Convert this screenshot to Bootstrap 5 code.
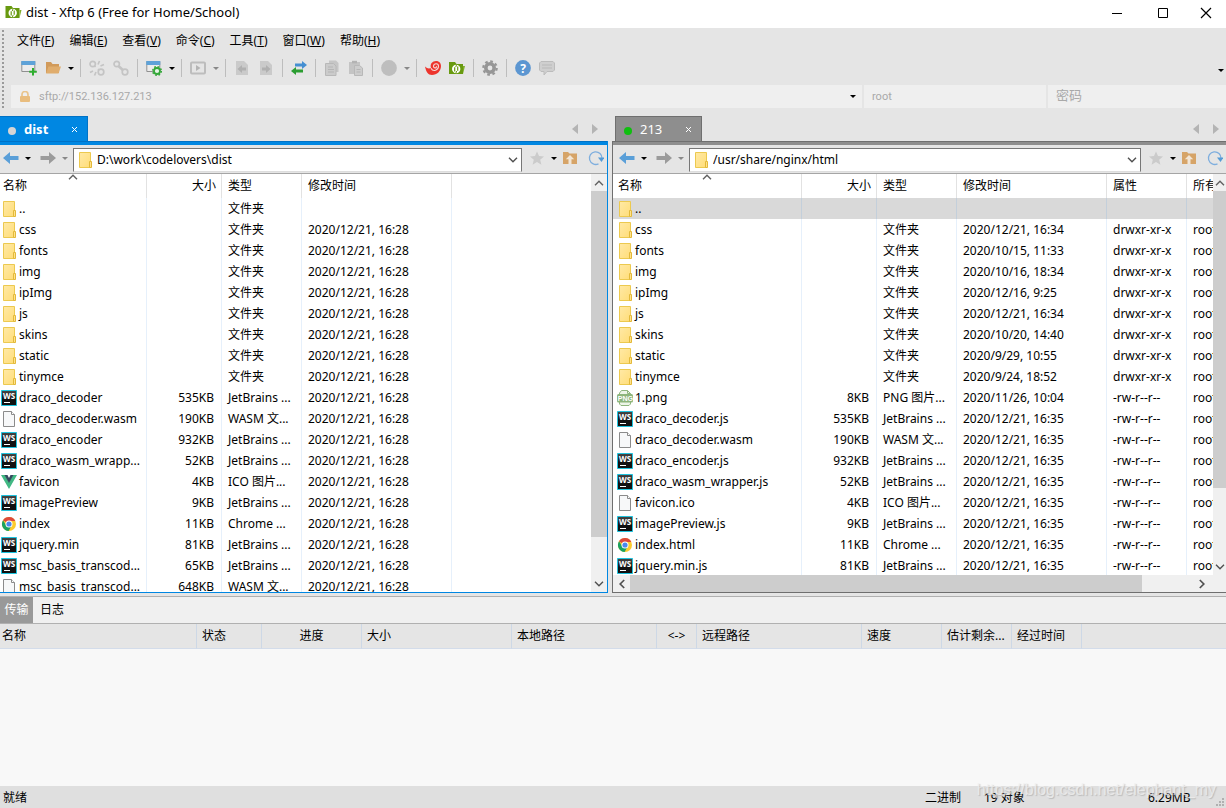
<!DOCTYPE html>
<html lang="zh-CN">
<head>
<meta charset="utf-8">
<meta name="viewport" content="width=device-width, initial-scale=1">
<title>dist - Xftp 6</title>
<link href="https://cdn.jsdelivr.net/npm/bootstrap@5.3.0/dist/css/bootstrap.min.css" rel="stylesheet">
<style>
body{font-family:"Noto Sans","Noto Sans CJK SC",sans-serif;font-size:12px;line-height:20px;color:#000;background:#e5e5e5;white-space:nowrap}
button{border:0;background:none;padding:0;color:inherit;line-height:inherit;font-size:inherit}
button svg,td svg,.fld>svg{display:block;flex:none}
.titlebar{height:28px;background:#fff;padding-left:5px;font-size:13px}
.titlebar .winbtn{width:46px;height:26px}
.titlebar .winbtn:last-child{width:40px}
.grip{width:11px;background:radial-gradient(circle at 1px 1px,#9a9a9a 1px,transparent 1px) 2px 2px/11px 4px repeat-y}
.menus{height:26px;gap:15px;padding-left:6px}
.tools{height:31px;padding:0 0 3px 6px}
.tb{width:24px;height:24px;display:flex;align-items:center;justify-content:center}
.car{width:11px;height:24px;display:flex;align-items:center;justify-content:center}
.car::after{content:"";border:3px solid transparent;border-top-color:currentColor;border-bottom:0}
.dim{color:#888}
.vsep{width:1px;height:18px;background:#bdbdbd;margin:0 4px}
.addr{height:23px;gap:2px}
.fld{background:#efefef;color:#a9a9a9}
.fld input,.path input{border:0;background:transparent;outline:0;padding:0;min-width:0;color:inherit;font-size:12px}
.fld input{font:11px/20px Roboto,"Noto Sans CJK SC",sans-serif}
.fld input::placeholder{color:#a9a9a9;opacity:1;font-size:13px}
.w-user{width:182px}.w-pass{width:178px}
.pane-area{flex:481 1 0;min-height:0;margin-top:4px}
.pane-l{width:calc(50% - 5px);--edge:#0087e2;--line:#0072c6}
.pane-r{flex:1;min-width:0;margin-left:4px;--edge:#8e8e8e;--line:#6f6f6f}
.tabrow{height:29px;padding-top:4px}
.tabnav{gap:14px;padding-right:10px}
.pane-r .tabnav{padding-right:7px}
.ptab{background:var(--edge);border:1px solid var(--line);border-bottom:0;color:#fff;font-size:13px;width:88px;padding:0 9px 0 8px}
.pane-l .ptab{border-left:0}
.pane-r .ptab{margin-left:3px;width:87px}
.led{width:8px;height:8px;border-radius:50%;background:#d5d5d5;margin-top:3px}
.led.on{background:#0fbf0f}
.frame{border:1px solid var(--line);border-top:0;min-height:0;flex:1}
.pane-l .frame{border-left:0;border-color:#0087e2}
.pane-r .frame{border-right:0}
.accent{height:4px;background:var(--edge);border-top:1px solid var(--line)}
.navrow{height:29px;padding-bottom:2px;border-bottom:1px solid #a5a5a5;background:#e5e5e5}
.navrow .tb{width:22px}
.pane-r .navrow{padding-left:3px}
.path{height:24px;background:#fff;border:1px solid #777;border-bottom-color:#ddd;padding:0 3px;margin:3px 0 0 3px}
.path input{margin-left:4px}
.listing{background:#fff;min-height:0;flex:1}
.view{overflow:hidden;min-width:0;flex:1}
.files{table-layout:fixed;width:100%;margin:0;border-collapse:separate;border-spacing:0;color:#000}
.files.wide{width:654px}
.files th{height:24px;font-weight:400;padding:0 6px;border-right:1px solid #e2e2e2;line-height:24px;overflow:hidden}
.files td{height:21px;padding:0 6px;border-right:1px solid #e6f0fb;line-height:21px;overflow:hidden}
.files th:first-child{padding:0 3px;position:relative}
.files td:first-child{padding:0 1px}
.wide th:first-child{padding-left:5px}
.wide td:first-child{padding-left:4px}
.files .num{text-align:right;padding-right:7px}
.files th.num{padding-right:5px}
.files tr.sel td{background:#d9d9d9;border-color:#c3cfdb}
.files .endcol{border-right:0}
.sortmark{position:absolute;left:50%;top:0;margin-left:-5px}
.nm{display:flex;align-items:center;gap:2px;height:20px}
.vbar{width:16px;background:#f0f0f0;flex:none}
.pane-r .vbar{width:13px}
.vbar button,.hbar button{width:100%;height:17px;display:flex;align-items:center;justify-content:center;flex:none}
.hbar button{width:17px}
.track{flex:1;min-height:0;min-width:0}
.thumb{background:#cdcdcd}
.hbar{height:17px;background:#f0f0f0}
.bottom{flex:190 1 0;min-height:0;padding-top:3px}
.btabs{height:28px;background:#f0f0f0;border-top:1px solid #b0b0b0;border-bottom:1px solid #b0b0b0}
.btabs button{padding:0 3px}
.btabs .cur{background:#999;color:#fff;width:33px}
.queue{background:#f8f8f8}
.qt{table-layout:fixed;width:100%;border-collapse:separate;border-spacing:0}
.qt th{height:25px;background:#e5e5e5;font-weight:400;padding:0 5px;border-right:1px solid #cdd8e6;border-bottom:1px solid #d3dcea;overflow:hidden}
.qt th:first-child{padding-left:2px}
.qt th:last-child{border-right:0}
.status{height:22px;background:#dfdfdf;padding:2px 3px 0}
.st-mode{width:59px}.st-num{width:164px}.st-size{width:75px}
.wm{position:absolute;right:10px;bottom:8px;font:16px/20px "Liberation Sans",sans-serif;color:rgba(240,240,240,.75);text-shadow:1px 1px 1px rgba(120,120,120,.35);pointer-events:none}
</style>
</head>
<body>
<svg width="0" height="0" class="position-absolute" aria-hidden="true">
<defs>
<linearGradient id="fg" x1="0" x2="1" y2="1"><stop stop-color="#ffe9a6"/><stop offset="1" stop-color="#ffdd78"/></linearGradient>
<linearGradient id="wg" y1="0" x2="0" y2="1"><stop stop-color="#484848"/><stop offset=".6" stop-color="#111"/></linearGradient>
<symbol id="folder" viewBox="0 0 16 16"><path d="M2.500.5h11v15h-11z" fill="url(#fg)" stroke="#ecc94f"/><path d="M12.500 9.500h2v6h-2z" fill="#ffe28b" stroke="#e3b93a"/></symbol>
<symbol id="doc" viewBox="0 0 16 16"><path d="M2.500.5h8l3 3v12h-11z" fill="#f7f8f9" stroke="#8b8b8b"/><path d="M10.500.5v3h3" fill="#fff" stroke="#8b8b8b"/></symbol>
<symbol id="ws" viewBox="0 0 16 16"><path d="M.5.5h15v15H.5z" fill="url(#wg)" stroke="#1fc3de"/><text x="2" y="8.500" font-size="8" font-weight="bold" font-family="Noto Sans" fill="#fff">WS</text><path d="M3 12h6v1H3z" fill="#fff"/></symbol>
<symbol id="vue" viewBox="0 0 16 16"><path d="M0 1h4l4 7 4-7h4L8 15z" fill="#41b883"/><path d="M3.500 1h3L8 4l1.500-3h3L8 9z" fill="#35495e"/></symbol>
<symbol id="chrome" viewBox="0 0 16 16"><circle cx="8" cy="8" r="7" fill="#fccb2e"/><path d="M8 8 2 4.300A7 7 0 0 1 14.300 5H8z" fill="#dd4a3b"/><path d="M2 4.300A7 7 0 0 0 7.600 15L10.600 9.500 8 8 5 9z" fill="#1ba261"/><circle cx="8" cy="8" r="3.500" fill="#fff"/><circle cx="8" cy="8" r="2.600" fill="#4a88ee"/></symbol>
<symbol id="png" viewBox="0 0 16 16"><path d="M2.500 4.500V3l2-2.500h6l3 3v1M2.500 12v2l1.500 1.500h8l1.500-1.500v-2" fill="#edf5e8" stroke="#8fb57e"/><path d="M10.500.5v3h3" fill="none" stroke="#8fb57e"/><rect y="4" width="16" height="8.500" rx="1.500" fill="#8db57b"/><text x=".8" y="10.900" font-size="7" font-weight="bold" font-family="Liberation Sans" fill="#fff">PNG</text></symbol>
<symbol id="xftp" viewBox="0 0 16 16"><path d="M0 2h6l1.500 2H14v10H0z" fill="#689a10"/><path d="M14 6h2l-2 8z" fill="#80ad2b"/><circle cx="7.200" cy="9" r="4.200" fill="#fff"/><path d="M5.700 7.200v4.200M8.700 6.600v4.200" stroke="#689a10" stroke-width="1.200"/><path d="M7.600 4.500 6.800 7M7.600 11l-.8 2.500" stroke="#689a10"/></symbol>
<symbol id="new" viewBox="0 0 16 16"><path d="M.8 1.500h13v10H.8z" fill="#ececec" stroke="#909090"/><path d="M.3 1h14v4H.3z" fill="#5ea2d8"/><path d="M12 8v7.500M8.200 11.800h7.600" stroke="#2fae2f" stroke-width="2"/></symbol>
<symbol id="wgear" viewBox="0 0 16 16"><path d="M.8 1.500h13v10H.8z" fill="#ececec" stroke="#909090"/><path d="M.3 1h14v4H.3z" fill="#5ea2d8"/><circle cx="11" cy="11" r="3" fill="#e8f5e8" stroke="#35a83a" stroke-width="1.800"/><circle cx="11" cy="11" r="4.300" fill="none" stroke="#35a83a" stroke-width="1.500" stroke-dasharray="1.700 1.680"/></symbol>
<symbol id="open" viewBox="0 0 16 16"><path d="M1 2h5l1.500 2H14v9H1z" fill="#d19a5a"/><path d="M3.500 6.500H16L13.500 13.500H1z" fill="#e0ad6d"/></symbol>
<symbol id="link" viewBox="0 0 16 16"><g fill="none" stroke="#c4c4c4" stroke-width="1.700"><circle cx="3.700" cy="4" r="2.700"/><circle cx="12" cy="12" r="2.800"/><path d="m5.500 6 4.600 4.200" stroke-width="2.600"/></g></symbol>
<symbol id="unlink" viewBox="0 0 16 16"><g fill="none" stroke="#c4c4c4" stroke-width="1.700"><circle cx="3.700" cy="4" r="2.700"/><circle cx="12" cy="12" r="2.800"/><path d="m5.500 6 1 1M9 9l1 1M9 4.500 10.500 1M11.500 6 15 4.500M4 11l-3 1.500M7 12l-1.500 3.500"/></g></symbol>
<symbol id="play" viewBox="0 0 16 16"><rect x="1" y="2.500" width="14" height="11" rx="1" fill="none" stroke="#bdbdbd" stroke-width="2"/><path d="M6 5v6l4.500-3z" fill="#b4b4b4"/></symbol>
<symbol id="docl" viewBox="0 0 16 16"><path d="M2 1h8l4 4v10H2z" fill="#cacaca"/><path d="M3.500 9 8 5v2.500h4v3H8V13z" fill="#b0b0b0"/></symbol>
<symbol id="docr" viewBox="0 0 16 16"><path d="M2 1h8l4 4v10H2z" fill="#cacaca"/><path d="M12.500 9 8 5v2.500H4v3h4V13z" fill="#b0b0b0"/></symbol>
<symbol id="swap" viewBox="0 0 16 16"><path d="M4 3.500h7V1l5 4-5 4V6.500H4z" fill="#458fd2"/><path d="M12 9.500H5V7l-5 4 5 4v-2.500h7z" fill="#2b9d31"/></symbol>
<symbol id="copy" viewBox="0 0 16 16"><path d="M5 .5h7l2.500 2.500v9H5z" fill="#c6c6c6"/><path d="M1.500 3.500h8L12 6v9.500H1.500z" fill="#cbcbcb" stroke="#b8b8b8"/><path d="M4 7h5M4 9.500h6M4 12h6" stroke="#b5b5b5"/></symbol>
<symbol id="paste" viewBox="0 0 16 16"><path d="M1 2h11v12H1z" fill="#c4c4c4"/><path d="M4 .8h5v2.500H4z" fill="#b3b3b3"/><path d="M6.500 5.500h5L14.500 8v7.500h-8z" fill="#cdcdcd" stroke="#b8b8b8"/><path d="M8.500 9.500h4M8.500 12h4" stroke="#b5b5b5"/></symbol>
<symbol id="ball" viewBox="0 0 16 16"><circle cx="8" cy="8" r="7.900" fill="#bebebe"/></symbol>
<symbol id="swirl" viewBox="0 0 16 16"><path d="M0 6.500c2 2 4 2.500 6 1.500C4.500 4 7.500 1 11 1c3.500 0 5 2.500 5 5 0 5-4 9-9 9-4 0-6-3.500-7-8.500z" fill="#ed352d"/><path d="M6 8.300c2 4 7.500 2 7.500-2C13.500 3 9 3 8.500 6c-.2 2.500 3.200 2.500 3 .3" fill="none" stroke="#f5d8d6" stroke-width="1.100"/></symbol>
<symbol id="gear" viewBox="0 0 16 16"><circle cx="8" cy="8" r="4.200" fill="none" stroke="#969696" stroke-width="3.600"/><circle cx="8" cy="8" r="6.700" fill="none" stroke="#969696" stroke-width="2.200" stroke-dasharray="2.700 2.560"/></symbol>
<symbol id="help" viewBox="0 0 16 16"><circle cx="8" cy="8" r="7.900" fill="#5c96d1"/><text x="8" y="12.500" text-anchor="middle" font-size="12" font-weight="bold" font-family="Noto Sans" fill="#fff">?</text></symbol>
<symbol id="chat" viewBox="0 0 16 16"><path d="M2 1.500h12L15.500 3v7L14 11.500H8l-3 3.500v-3.500H2L.5 10V3z" fill="#cfcfcf" stroke="#bcbcbc"/><path d="M3 5h10M3 8h10" stroke="#b9b9b9"/></symbol>
<symbol id="lock" viewBox="0 0 12 12"><path d="M3 5V3.500a3 3 0 0 1 6 0V5" fill="none" stroke="#e9c48c" stroke-width="1.700"/><rect x="1" y="5" width="10" height="6" rx="1" fill="#e9bd7e"/></symbol>
<symbol id="back" viewBox="0 0 16 14"><path d="M0 7 7 1v4h8.500v4H7v4z"/></symbol>
<symbol id="fwd" viewBox="0 0 16 14"><path d="M16 7 9 1v4H.5v4H9v4z"/></symbol>
<symbol id="star" viewBox="0 0 16 16"><path d="m8 1.500 2 4.500 5 .4-3.800 3.300 1.200 5L8 12l-4.400 2.700 1.200-5L1 6.400 6 6z" fill="#cbcbcb"/></symbol>
<symbol id="upf" viewBox="0 0 16 16"><path d="M1 2h5l1.500 1.500H15V14H1z" fill="#d6a468"/><path d="M8 5 3.800 9.200H6.500V14h3V9.200h2.700z" fill="#f2e6d6"/></symbol>
<symbol id="reload" viewBox="0 0 16 16"><path d="M10.500 13.800A6.300 6.300 0 1 1 14 8.500" fill="none" stroke="#7eaede" stroke-width="1.300"/><path d="M10 7.500h6.500l-3 4.500z" fill="#559bd6"/></symbol>
<symbol id="chevd" viewBox="0 0 10 6"><path d="m1 .8 4 4 4-4" fill="none" stroke="#505050" stroke-width="1.400"/></symbol>
<symbol id="chevu" viewBox="0 0 10 6"><path d="m1 5.200 4-4 4 4" fill="none" stroke="#606060" stroke-width="1.400"/></symbol>
<symbol id="chevl" viewBox="0 0 6 10"><path d="m5.200 1-4 4 4 4" fill="none" stroke="#505050" stroke-width="1.700"/></symbol>
<symbol id="chevr" viewBox="0 0 6 10"><path d="m.8 1 4 4-4 4" fill="none" stroke="#505050" stroke-width="1.700"/></symbol>
</defs>
</svg>

<div class="d-flex flex-column vh-100 overflow-hidden position-relative">
  <header class="titlebar d-flex align-items-start flex-shrink-0">
    <div class="d-flex align-items-center h-100 gap-1 pb-1"><svg width="17" height="16"><use href="#xftp"/></svg><span>dist - Xftp 6 (Free for Home/School)</span></div>
    <div class="ms-auto d-flex">
      <button class="winbtn" aria-label="最小化"><svg class="mx-auto" width="12" height="12"><path d="M1 6.500h10" stroke="#000"/></svg></button>
      <button class="winbtn" aria-label="最大化"><svg class="mx-auto" width="12" height="12"><path d="M1.500 1.500h9v9h-9z" fill="none" stroke="#000"/></svg></button>
      <button class="winbtn" aria-label="关闭"><svg class="mx-auto" width="12" height="12"><path d="m1 1 10 10M11 1 1 11" stroke="#000" stroke-width="1.200"/></svg></button>
    </div>
  </header>

  <div class="d-flex flex-shrink-0">
    <div class="grip"></div>
    <div class="flex-grow-1">
      <nav class="menus d-flex align-items-center">
        <button>文件(<u>F</u>)</button><button>编辑(<u>E</u>)</button><button>查看(<u>V</u>)</button><button>命令(<u>C</u>)</button><button>工具(<u>T</u>)</button><button>窗口(<u>W</u>)</button><button>帮助(<u>H</u>)</button>
      </nav>
      <div class="tools d-flex align-items-center" role="toolbar" aria-label="工具栏">
        <button class="tb" aria-label="新建"><svg width="16" height="16"><use href="#new"/></svg></button>
        <button class="tb" aria-label="打开"><svg width="16" height="16"><use href="#open"/></svg></button>
        <button class="car" aria-label="打开列表"></button><span class="vsep"></span>
        <button class="tb" aria-label="断开"><svg width="16" height="16"><use href="#unlink"/></svg></button>
        <button class="tb" aria-label="重新连接"><svg width="16" height="16"><use href="#link"/></svg></button><span class="vsep"></span>
        <button class="tb" aria-label="属性"><svg width="16" height="16"><use href="#wgear"/></svg></button>
        <button class="car" aria-label="属性列表"></button><span class="vsep"></span>
        <button class="tb" aria-label="执行"><svg width="16" height="16"><use href="#play"/></svg></button>
        <button class="car dim" aria-label="执行列表"></button><span class="vsep"></span>
        <button class="tb" aria-label="向左传输"><svg width="16" height="16"><use href="#docl"/></svg></button>
        <button class="tb" aria-label="向右传输"><svg width="16" height="16"><use href="#docr"/></svg></button><span class="vsep"></span>
        <button class="tb" aria-label="同步"><svg width="16" height="16"><use href="#swap"/></svg></button><span class="vsep"></span>
        <button class="tb" aria-label="复制"><svg width="16" height="16"><use href="#copy"/></svg></button>
        <button class="tb" aria-label="粘贴"><svg width="16" height="16"><use href="#paste"/></svg></button><span class="vsep"></span>
        <button class="tb" aria-label="编码"><svg width="16" height="16"><use href="#ball"/></svg></button>
        <button class="car dim" aria-label="编码列表"></button><span class="vsep"></span>
        <button class="tb" aria-label="Xshell"><svg width="16" height="16"><use href="#swirl"/></svg></button>
        <button class="tb" aria-label="Xftp"><svg width="16" height="16"><use href="#xftp"/></svg></button><span class="vsep"></span>
        <button class="tb" aria-label="选项"><svg width="16" height="16"><use href="#gear"/></svg></button><span class="vsep"></span>
        <button class="tb" aria-label="帮助"><svg width="16" height="16"><use href="#help"/></svg></button>
        <button class="tb" aria-label="反馈"><svg width="16" height="16"><use href="#chat"/></svg></button>
        <button class="car ms-auto align-self-end" aria-label="更多"></button>
      </div>
      <div class="addr d-flex">
        <div class="fld d-flex align-items-center flex-grow-1 ps-2"><svg width="12" height="12"><use href="#lock"/></svg><input class="flex-grow-1 ms-2" aria-label="地址" value="sftp://152.136.127.213"><button class="car text-black me-1" aria-label="历史"></button></div>
        <div class="fld w-user d-flex ps-2"><input class="w-100" aria-label="用户名" value="root"></div>
        <div class="fld w-pass d-flex ps-2"><input class="w-100" type="password" aria-label="密码" placeholder="密码"></div>
      </div>
    </div>
  </div>

  <main class="pane-area d-flex">
    <section class="pane-l d-flex flex-column">
      <div class="tabrow d-flex flex-shrink-0">
        <button class="ptab d-flex align-items-center"><span class="led"></span><b class="ms-2">dist</b><svg class="ms-auto" width="7" height="7"><path d="m1 1 5 5M6 1 1 6" stroke="#fff"/></svg></button>
        <div class="tabnav ms-auto d-flex align-items-center"><svg width="6" height="10"><path d="M6 0v10L0 5z" fill="#b4b4b4"/></svg><svg width="6" height="10"><path d="M0 0v10l6-5z" fill="#b4b4b4"/></svg></div>
      </div>
      <div class="frame d-flex flex-column">
        <div class="accent"></div>
        <div class="navrow d-flex align-items-center flex-shrink-0">
          <button class="tb" aria-label="后退"><svg width="16" height="14" fill="#5a9fd8"><use href="#back"/></svg></button><button class="car me-1" aria-label="后退列表"></button>
          <button class="tb" aria-label="前进"><svg width="16" height="14" fill="#9b9b9b"><use href="#fwd"/></svg></button><button class="car dim" aria-label="前进列表"></button>
          <div class="path d-flex align-items-center flex-grow-1"><svg width="16" height="16"><use href="#folder"/></svg><input class="flex-grow-1" aria-label="本地路径" value="D:\work\codelovers\dist"><button aria-label="路径列表"><svg width="10" height="6"><use href="#chevd"/></svg></button></div>
          <button class="tb ms-1" aria-label="收藏"><svg width="16" height="16"><use href="#star"/></svg></button><button class="car" aria-label="收藏列表"></button>
          <button class="tb" aria-label="上级"><svg width="16" height="16"><use href="#upf"/></svg></button><button class="tb ms-1" aria-label="刷新"><svg width="16" height="16"><use href="#reload"/></svg></button>
        </div>
        <div class="listing d-flex">
          <div class="view"><table class="files"><colgroup><col style="width:147px"><col style="width:75px"><col style="width:80px"><col style="width:150px"><col></colgroup>
            <thead><tr><th>名称<svg class="sortmark" width="10" height="6"><use href="#chevu"/></svg></th><th class="num">大小</th><th>类型</th><th>修改时间</th><th class="endcol"></th></tr></thead><tbody id="local"></tbody></table></div>
          <div class="vbar d-flex flex-column"><button aria-label="上滚"><svg width="10" height="6"><use href="#chevu"/></svg></button><div class="track"><div class="thumb" style="height:90%"></div></div><button aria-label="下滚"><svg width="10" height="6"><use href="#chevd"/></svg></button></div>
        </div>
      </div>
    </section>

    <section class="pane-r d-flex flex-column">
      <div class="tabrow d-flex flex-shrink-0">
        <button class="ptab d-flex align-items-center"><span class="led on"></span><span class="ms-2">213</span><svg class="ms-auto" width="7" height="7"><path d="m1 1 5 5M6 1 1 6" stroke="#fff"/></svg></button>
        <div class="tabnav ms-auto d-flex align-items-center"><svg width="6" height="10"><path d="M6 0v10L0 5z" fill="#b4b4b4"/></svg><svg width="6" height="10"><path d="M0 0v10l6-5z" fill="#b4b4b4"/></svg></div>
      </div>
      <div class="frame d-flex flex-column">
        <div class="accent"></div>
        <div class="navrow d-flex align-items-center flex-shrink-0">
          <button class="tb" aria-label="后退"><svg width="16" height="14" fill="#5a9fd8"><use href="#back"/></svg></button><button class="car me-1" aria-label="后退列表"></button>
          <button class="tb" aria-label="前进"><svg width="16" height="14" fill="#9b9b9b"><use href="#fwd"/></svg></button><button class="car dim" aria-label="前进列表"></button>
          <div class="path d-flex align-items-center flex-grow-1"><svg width="16" height="16"><use href="#folder"/></svg><input class="flex-grow-1" aria-label="远程路径" value="/usr/share/nginx/html"><button aria-label="路径列表"><svg width="10" height="6"><use href="#chevd"/></svg></button></div>
          <button class="tb ms-1" aria-label="收藏"><svg width="16" height="16"><use href="#star"/></svg></button><button class="car" aria-label="收藏列表"></button>
          <button class="tb" aria-label="上级"><svg width="16" height="16"><use href="#upf"/></svg></button><button class="tb ms-1" aria-label="刷新"><svg width="16" height="16"><use href="#reload"/></svg></button>
        </div>
        <div class="listing d-flex">
          <div class="view"><table class="files wide"><colgroup><col style="width:189px"><col style="width:75px"><col style="width:80px"><col style="width:150px"><col style="width:80px"><col style="width:80px"></colgroup>
            <thead><tr><th>名称<svg class="sortmark" width="10" height="6"><use href="#chevu"/></svg></th><th class="num">大小</th><th>类型</th><th>修改时间</th><th>属性</th><th>所有者</th></tr></thead><tbody id="remote"></tbody></table></div>
          <div class="vbar d-flex flex-column"><button aria-label="上滚"><svg width="10" height="6"><use href="#chevu"/></svg></button><div class="track"><div class="thumb" style="height:81%"></div></div><button aria-label="下滚"><svg width="10" height="6"><use href="#chevd"/></svg></button></div>
        </div>
        <div class="hbar d-flex align-items-center flex-shrink-0"><button aria-label="左滚"><svg width="6" height="10"><use href="#chevl"/></svg></button><div class="track h-100"><div class="thumb h-100" style="width:91%"></div></div><button class="me-3" aria-label="右滚"><svg width="6" height="10"><use href="#chevr"/></svg></button></div>
      </div>
    </section>
  </main>

  <section class="bottom d-flex flex-column">
    <div class="btabs d-flex flex-shrink-0"><button class="cur">传输</button><button class="ms-1">日志</button></div>
    <div class="queue flex-grow-1">
      <table class="qt"><colgroup><col style="width:197px"><col style="width:65px"><col style="width:100px"><col style="width:150px"><col style="width:145px"><col style="width:40px"><col style="width:165px"><col style="width:80px"><col style="width:70px"><col style="width:70px"><col></colgroup>
      <thead><tr><th>名称</th><th>状态</th><th class="text-center">进度</th><th>大小</th><th>本地路径</th><th class="text-center">&lt;-&gt;</th><th>远程路径</th><th>速度</th><th>估计剩余...</th><th>经过时间</th><th></th></tr></thead></table>
    </div>
  </section>

  <footer class="status d-flex flex-shrink-0"><span class="me-auto">就绪</span><span class="st-mode">二进制</span><span class="st-num">19 对象</span><span class="st-size">6.29MB</span></footer>
  <svg class="position-absolute bottom-0 end-0" width="10" height="10" fill="#b0b0b0"><path d="M6 0h2v2H6zM3 3h2v2H3zM6 3h2v2H6zM0 6h2v2H0zM3 6h2v2H3zM6 6h2v2H6z"/></svg>
  <div class="wm">https://blog.csdn.net/elephant_my</div>
</div>

<script>
const F='文件夹', J='JetBrains ...', W='WASM 文...', I='ICO 图片...', C='Chrome ...';
const dirs=['css','fonts','img','ipImg','js','skins','static','tinymce'];
const d1='2020/12/21, 16:28', d2='2020/12/21, 16:35', D='drwxr-xr-x', R='-rw-r--r--';
const local=[['folder','..','',F,''],...dirs.map(n=>['folder',n,'',F,d1]),
 ['ws','draco_decoder','535KB',J,d1],['doc','draco_decoder.wasm','190KB',W,d1],['ws','draco_encoder','932KB',J,d1],
 ['ws','draco_wasm_wrapp...','52KB',J,d1],['vue','favicon','4KB',I,d1],['ws','imagePreview','9KB',J,d1],
 ['chrome','index','11KB',C,d1],['ws','jquery.min','81KB',J,d1],['ws','msc_basis_transcod...','65KB',J,d1],['doc','msc_basis_transcod...','648KB',W,d1]];
const times=['2020/12/21, 16:34','2020/10/15, 11:33','2020/10/16, 18:34','2020/12/16, 9:25','2020/12/21, 16:34','2020/10/20, 14:40','2020/9/29, 10:55','2020/9/24, 18:52'];
const remote=[['folder','..','','','','',''],...dirs.map((n,i)=>['folder',n,'',F,times[i],D,'root']),
 ['png','1.png','8KB','PNG 图片...','2020/11/26, 10:04',R,'root'],
 ...[['ws','draco_decoder.js','535KB',J],['doc','draco_decoder.wasm','190KB',W],['ws','draco_encoder.js','932KB',J],
 ['ws','draco_wasm_wrapper.js','52KB',J],['doc','favicon.ico','4KB',I],['ws','imagePreview.js','9KB',J],
 ['chrome','index.html','11KB',C],['ws','jquery.min.js','81KB',J]].map(r=>[...r,d2,R,'root'])];
const row=(r,extra,cls)=>`<tr class="${cls}"><td><div class="nm"><svg width="16" height="16"><use href="#${r[0]}"/></svg><span>${r[1]}</span></div></td><td class="num">${r[2]}</td>${r.slice(3).map(c=>`<td>${c}</td>`).join('')}${extra}</tr>`;
document.getElementById('local').innerHTML=local.map(r=>row(r,'<td class="endcol"></td>','')).join('');
document.getElementById('remote').innerHTML=remote.map((r,i)=>row(r,'',i?'':'sel')).join('');
</script>
<script src="https://cdn.jsdelivr.net/npm/bootstrap@5.3.0/dist/js/bootstrap.bundle.min.js"></script>
</body>
</html>
